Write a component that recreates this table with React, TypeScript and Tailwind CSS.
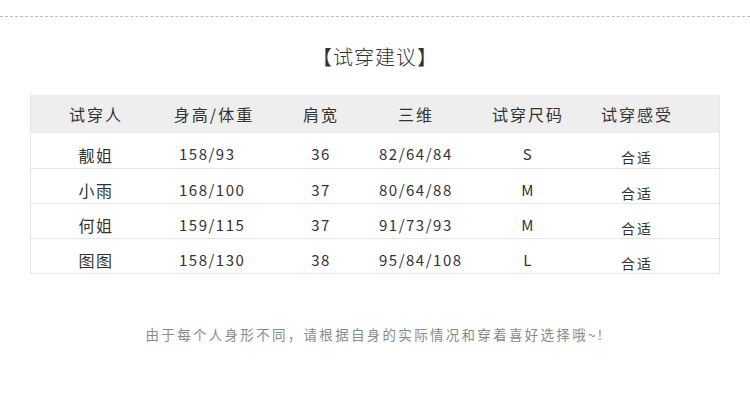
import React from 'react';

type Row = { name: string; hw: string; shoulder: string; bwh: string; size: string; feel: string };

const rows: Row[] = [
  { name: '靓姐', hw: '158/93', shoulder: '36', bwh: '82/64/84', size: 'S', feel: '合适' },
  { name: '小雨', hw: '168/100', shoulder: '37', bwh: '80/64/88', size: 'M', feel: '合适' },
  { name: '何姐', hw: '159/115', shoulder: '37', bwh: '91/73/93', size: 'M', feel: '合适' },
  { name: '图图', hw: '158/130', shoulder: '38', bwh: '95/84/108', size: 'L', feel: '合适' },
];

const font = { fontFamily: '"Noto Sans CJK SC", "Noto Sans", sans-serif' };

export default function App() {
  return (
    <div className="w-[750px] h-[400px] bg-white text-[#333] overflow-hidden" style={font}>
      {/* 顶部虚线 */}
      <div className="pt-[16px]">
        <div className="border-t border-dashed border-[#bdbdbd]" />
      </div>

      <h2 className="mt-[26px] text-center text-[20px] font-light tracking-[1px] leading-[28px] text-[#333]">
        【试穿建议】
      </h2>

      {/* 表格 */}
      <div className="mt-[24px] mx-[30px] border border-[#e6e6e6] border-t-0">
        <div className="flex h-[38px] items-center bg-[#eeeeee] text-[16px] tracking-[2px]">
          <div className="w-[130px] text-center">试穿人</div>
          <div className="w-[106px] text-center">身高/体重</div>
          <div className="w-[108px] text-center">肩宽</div>
          <div className="w-[82px] text-center">三维</div>
          <div className="w-[142px] text-center">试穿尺码</div>
          <div className="w-[76px] text-center">试穿感受</div>
        </div>
        {rows.map((r, i) => (
          <div
            key={r.name}
            className={`flex h-[35px] items-center pt-[8px] text-[15px] tracking-[1.5px] ${i > 0 ? 'border-t border-[#e6e6e6]' : ''}`}
          >
            <div className="w-[130px] text-center text-[16px]">{r.name}</div>
            <div className="w-[106px] pl-[18px] whitespace-nowrap">{r.hw}</div>
            <div className="w-[108px] text-center">{r.shoulder}</div>
            <div className="w-[82px] pl-[4px] whitespace-nowrap">{r.bwh}</div>
            <div className="w-[142px] text-center">{r.size}</div>
            <div className="w-[76px] text-center text-[14px] tracking-[2px] pt-[6px]">{r.feel}</div>
          </div>
        ))}
      </div>

      <p className="mt-[50px] text-center text-[13.5px] tracking-[2.3px] text-[#8a8a8a]">
        由于每个人身形不同，请根据自身的实际情况和穿着喜好选择哦~!
      </p>
    </div>
  );
}
